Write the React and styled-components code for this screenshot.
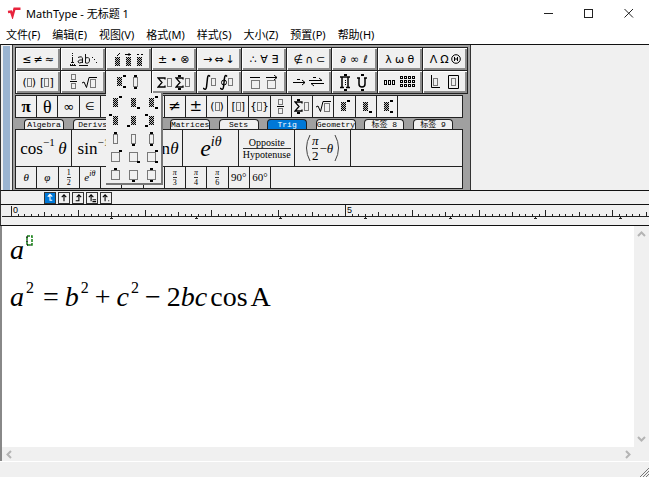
import React, { useState } from "react";
import styled, { createGlobalStyle } from "styled-components";

const GlobalStyle = createGlobalStyle`
  * {
    box-sizing: border-box;
  }
  body {
    margin: 0;
    background: #fff;
    color: #000;
    font-family: "Noto Sans", "Noto Sans CJK SC", sans-serif;
    font-size: 11px;
  }
  button {
    font: inherit;
    color: inherit;
    border: none;
    padding: 0;
    margin: 0;
    background: none;
  }
`;

const Window = styled.main`
  display: flex;
  flex-direction: column;
  min-height: 100vh;
  background: #f0f0f0;
`;

const TitleBar = styled.header`
  display: flex;
  align-items: center;
  height: 25px;
  padding-left: 7px;
  background: #fff;
`;

const Title = styled.h1`
  flex: 1;
  margin: 0;
  padding-left: 5px;
  font-size: 11px;
  font-weight: 400;
`;

const WindowButton = styled.button`
  display: flex;
  align-items: center;
  justify-content: center;
  width: 40px;
  height: 25px;
`;

const MenuBar = styled.nav`
  display: flex;
  gap: 12px;
  height: 19px;
  padding-left: 6px;
  background: #fff;
  line-height: 19px;
`;

const Toolbar = styled.section`
  display: flex;
  border-top: 1px solid #111;
  border-bottom: 1px solid #111;
  border-left: 1px solid #333;
`;

const Grip = styled.div`
  width: 7px;
  margin: 1px 2px 0;
  background: #9ab4d1;
`;

const Palette = styled.div`
  padding: 2px 2px 1px;
  border: 1px solid #333;
  border-width: 0 1px;
  background: #a0a0a0;
  font-family: "Liberation Serif", serif;
`;

const PaletteGrid = styled.div`
  display: grid;
  grid-template-columns: repeat(10, 1fr);
  gap: 1px;
  width: 453px;
  padding: 1px;
  background: #222;
`;

const PaletteItem = styled.div`
  position: relative;
`;

const PaletteButton = styled.button`
  display: flex;
  align-items: center;
  justify-content: center;
  gap: ${(p) => p.$gap ?? 2}px;
  width: 100%;
  height: 22px;
  background: #f0f0f0;
  box-shadow: ${(p) => (p.$open ? "none" : "inset 1px 1px #fff, inset -2px -2px #8c8c8c")};
`;

const Popup = styled.div`
  position: absolute;
  z-index: 2;
  top: 22px;
  left: 0;
  display: grid;
  grid-template-columns: repeat(3, 18px);
  grid-auto-rows: 18px;
  width: 57px;
  padding: 1px;
  background: #f0f0f0;
  box-shadow: inset -2px -2px #777;

  button {
    display: flex;
    align-items: center;
    justify-content: center;
  }
`;

const Strip = styled.div`
  width: 448px;
  height: ${(p) => p.$height || 23}px;
  margin-top: ${(p) => (p.$joined ? -1 : p.$top || 0)}px;
  border: 1px solid #222;
  background: #f0f0f0;
`;

const Cells = styled.div`
  display: grid;
  grid-template-columns: repeat(${(p) => p.$count}, 1fr);
  width: ${(p) => p.$width}px;
  height: 100%;
`;

const Cell = styled.button`
  display: flex;
  align-items: center;
  justify-content: ${(p) => (p.$end ? "flex-end" : "center")};
  gap: ${(p) => p.$gap || 0}px;
  min-width: 0;
  padding-right: ${(p) => (p.$end ? 4 : 0)}px;
  overflow: hidden;
  border-right: 1px solid #222;
  font-size: ${(p) => p.$size || 12}px;
  line-height: 1;
  white-space: nowrap;
`;

const Glyph = styled.span`
  min-width: ${(p) => (p.$narrow ? 4 : 9)}px;
  font-family: ${(p) => (p.$serif ? '"Liberation Serif", serif' : '"DejaVu Sans", sans-serif')};
  font-size: ${(p) => p.$size || 11}px;
  font-weight: ${(p) => (p.$bold ? 700 : 400)};
  line-height: 1;
  text-align: center;
`;

const Gap = styled.span`
  width: 4px;
`;

const Sup = styled.span`
  margin-left: ${(p) => (p.$up > 12 ? 2 : 0)}px;
  font-size: ${(p) => p.$size || 16}px;
  line-height: 0;
  vertical-align: ${(p) => p.$up}px;
`;

const Stack = styled.span`
  display: inline-flex;
  flex-direction: column;
  align-items: center;
  font-size: ${(p) => p.$size}px;
  line-height: ${(p) => p.$size + 1}px;

  & > :first-child {
    align-self: stretch;
    border-bottom: 1px solid #333;
    text-align: center;
  }
`;

const Tabs = styled.div`
  display: flex;
  justify-content: space-between;
  align-items: flex-end;
  width: 438px;
  height: 11px;
  padding-left: 9px;
`;

const Tab = styled.button`
  width: 40px;
  height: 10px;
  overflow: hidden;
  border: 1px solid #222;
  border-bottom: none;
  border-radius: 4px 4px 0 0;
  background: ${(p) => (p.$active ? "#0078d7" : "#f0f0f0")};
  color: ${(p) => (p.$active ? "#fff" : "#000")};
  font-family: "Liberation Mono", "Noto Sans CJK SC", monospace;
  font-size: 8px;
  line-height: 10px;
  white-space: nowrap;
`;

const StopBar = styled.div`
  display: flex;
  align-items: center;
  gap: 2px;
  height: 13px;
  padding-left: 43px;
  border-left: 1px solid #333;
`;

const StopButton = styled.button`
  display: flex;
  align-items: center;
  justify-content: center;
  width: 12px;
  height: 12px;
  border: 1px solid #333;
  background: ${(p) => (p.$active ? "#0078d7" : "#f0f0f0")};
  color: ${(p) => (p.$active ? "#fff" : "#000")};
`;

const RulerSvg = styled.svg`
  display: block;
  width: 100%;
  height: 22px;
  border-top: 1px solid #111;
  border-bottom: 1px solid #111;
  border-left: 1px solid #333;

  text {
    font-family: "Liberation Sans", sans-serif;
    font-size: 9px;
  }
`;

const Work = styled.section`
  display: flex;
  flex: 1;
  border-left: 2px solid #888;
`;

const Page = styled.div`
  flex: 1;
  padding-left: 8px;
  background: #fff;
  font-family: "Liberation Serif", serif;
  font-size: 28px;
`;

const Line = styled.div`
  height: 47px;
  line-height: 47px;
  white-space: nowrap;
`;

const Op = styled.span`
  margin: 0 6px;
`;

const Rel = styled.span`
  margin: 0 6px 0 9px;
`;

const Fn = styled.span`
  margin: 0 3px;
`;

const VScroll = styled.div`
  display: flex;
  flex-direction: column;
  justify-content: space-between;
  align-items: center;
  width: 15px;
  padding: 1px 0;
`;

const HScroll = styled.div`
  display: flex;
  justify-content: space-between;
  align-items: center;
  height: 14px;
  padding: 0 17px 0 3px;
  border-left: 2px solid #888;
`;

const StatusBar = styled.footer`
  display: flex;
  justify-content: flex-end;
  align-items: flex-end;
  height: 16px;
  border-top: 1px solid #fff;
`;

const BASE = { tl: [0, 0], tr: [10, 0], bl: [0, 11], br: [10, 11], t: [5, 0], b: [5, 12] };

function Slot({ w = 6, h = 10 }) {
  return (
    <svg width={w} height={h} aria-hidden="true">
      <rect x="0.5" y="0.5" width={w - 1} height={h - 1} fill="none" stroke="#000" strokeDasharray="1 1" />
    </svg>
  );
}

function Hatch({ x = 0, y = 0, w = 5, h = 9 }) {
  const rows = [];
  for (let i = 0; i < h; i++) {
    rows.push(
      <path key={i} d={`M${x + (i % 2)} ${y + i + 0.5}H${x + w}`} stroke="#000" strokeDasharray="1 1" />
    );
  }
  return (
    <g>
      <rect x={x} y={y} width={w} height={h} fill="#bbb" />
      {rows}
    </g>
  );
}

// a base (hatched, narrow or wide) with small filled marks around it
function Script({ base = "hatch", marks = [] }) {
  return (
    <svg width="14" height="14" aria-hidden="true">
      {base === "hatch" && <Hatch x={4} y={2} w={5} h={9} />}
      {base === "narrow" && (
        <rect x="4.5" y="2.5" width="4" height="9" fill="none" stroke="#000" strokeDasharray="1 1" />
      )}
      {base === "wide" && (
        <rect x="2.5" y="2.5" width="8" height="9" fill="none" stroke="#000" strokeDasharray="1 1" />
      )}
      {marks.map((m) => (
        <rect key={m} x={BASE[m][0]} y={BASE[m][1]} width="3" height="2" fill="#000" />
      ))}
    </svg>
  );
}

function Accent({ d }) {
  return (
    <svg width="7" height="13" aria-hidden="true">
      <Hatch x={1} y={4} w={5} h={9} />
      <path d={d} fill="none" stroke="#000" />
    </svg>
  );
}

function Spacing() {
  return (
    <svg width="29" height="15" aria-hidden="true" fill="none" stroke="#111">
      <path d="M3.5 1V9M2 10.5H5M1 12.5H7" strokeDasharray="1 1" />
      <path d="M3.5 6V11M1 13.5H7" />
      <path d="M9 5.5Q13.500 3.500 13.500 7V11M13.500 8Q9 7.500 9 10Q10 12 13.500 10M16.500 2V11Q20.500 12 20.500 8Q20.500 4.500 16.500 6" />
      <path d="M10 13.500H19" />
      <path d="M23 5.500h1M25 7.500h1M27 10.500h1" />
    </svg>
  );
}

function Fraction() {
  return (
    <svg width="8" height="16" aria-hidden="true" fill="none" stroke="#000">
      <rect x="1.5" y="0.5" width="4" height="5" strokeDasharray="1 1" />
      <path d="M0 7.500H7" />
      <rect x="1.5" y="9.5" width="4" height="5" strokeDasharray="1 1" />
    </svg>
  );
}

function Root() {
  return (
    <svg width="15" height="13" aria-hidden="true" fill="none" stroke="#000">
      <path d="M0 7L2 6L4.500 11.500L7 1.500H15" />
      <rect x="8.5" y="3.5" width="5" height="8" strokeDasharray="1 1" />
    </svg>
  );
}

function Fence({ left, right }) {
  return (
    <>
      <Glyph $narrow>{left}</Glyph>
      <Slot w={5} h={9} />
      <Glyph $narrow>{right}</Glyph>
    </>
  );
}

function Sum({ limits }) {
  return (
    <svg width="15" height="15" aria-hidden="true">
      <path d="M8 4.500V3H1L5 7.500L1 12H8V10.500" fill="none" stroke="#000" strokeWidth="1.3" />
      {limits && <path d="M3 14h3M3 1h3" stroke="#000" strokeWidth="2" />}
      <rect x="10.5" y="3.5" width="4" height="8" fill="none" stroke="#000" strokeDasharray="1 1" />
    </svg>
  );
}

function Integral({ loop }) {
  return (
    <svg width="14" height="17" aria-hidden="true" fill="none" stroke="#000">
      <path d="M7 2.500Q5 0 4.500 4L3.500 13Q3 17 0 14" strokeWidth="1.500" />
      {loop && <circle cx="4" cy="8.500" r="2.500" />}
      <rect x="8.500" y="4.500" width="4" height="7" strokeDasharray="1 1" />
    </svg>
  );
}

function Bar({ arrow }) {
  return (
    <svg width="12" height="15" aria-hidden="true" fill="none" stroke="#000">
      <path d={arrow ? "M0 2.500H11M8 0L11 2.500L8 5" : "M0 2.500H10"} />
      <rect x="1.5" y="5.5" width="8" height="8" strokeDasharray="1 1" />
    </svg>
  );
}

function LabelArrows() {
  return (
    <svg width="32" height="12" aria-hidden="true" fill="none" stroke="#000">
      <path d="M0 6.500H12M9 4L12 6.500L9 9M4 3.500h3M16 4.500H29L26 2M31 7.500H18L21 10" />
      <path d="M20 1.500h3" />
    </svg>
  );
}

function Product({ cup }) {
  return (
    <svg width="11" height="17" aria-hidden="true" fill="none" stroke="#000">
      <path d={cup ? "M2 4V10Q2 13 5 13Q8 13 8 10V4M0 4h3M7 4h3" : "M2 3V13M8 3V13M0 3h10M0 13.500h4M6 13.500h4"} strokeWidth="1.5" />
      <path d="M4 1h3M4 16h3" strokeWidth="2" />
      {!cup && <path d="M5.500 6V11" strokeDasharray="1 1" />}
    </svg>
  );
}

function Matrix({ rows, cols }) {
  const cells = [];
  for (let r = 0; r < rows; r++) {
    for (let c = 0; c < cols; c++) {
      cells.push(<rect key={r + "-" + c} x={c * 4 + 0.5} y={r * 4 + 0.5} width="2" height={rows > 1 ? 2 : 4} />);
    }
  }
  return (
    <svg width={cols * 4} height={rows > 1 ? rows * 4 : 5} aria-hidden="true" fill="none" stroke="#000">
      {cells}
    </svg>
  );
}

function Frame({ d }) {
  return (
    <svg width="12" height="14" aria-hidden="true" fill="none" stroke="#000">
      <path d={d} />
      <rect x="3.5" y="3.5" width="4" height="7" strokeDasharray="1 1" />
    </svg>
  );
}

function CircledTheta() {
  return (
    <svg width="10" height="10" aria-hidden="true" fill="none" stroke="#000">
      <circle cx="5" cy="5" r="4.300" />
      <path d="M3.500 3V7M6.500 3V7M3.500 5H6.500" />
    </svg>
  );
}

const glyphs = (...list) => list.map((g, i) => <Glyph key={i}>{g}</Glyph>);

const palette = [
  ["Relations", glyphs("≤", "≠", "≈")],
  ["Spaces", <Spacing />],
  ["Embellishments", <><Accent d="M3 3L6 0" /><Accent d="M0 1.500H6M4 0V3" /><Accent d="M1 1.500h2M5 1.500h2" /></>, 4],
  ["Operators", glyphs("±", "•", "⊗")],
  ["Arrows", glyphs("→", "⇔", "↓")],
  ["Logic", glyphs("∴", "∀", "∃")],
  ["Sets", glyphs("∉", "∩", "⊂")],
  ["Miscellaneous", glyphs("∂", "∞", "ℓ")],
  ["Greek lower case", glyphs("λ", "ω", "θ")],
  ["Greek upper case", <>{glyphs("Λ", "Ω")}<CircledTheta /></>],
  ["Fences", <><Fence left="(" right=")" /><Gap /><Fence left="[" right="]" /></>, 0],
  ["Fractions and radicals", <><Fraction /><Root /></>, 4],
  ["Scripts", <><Script marks={["tr", "br"]} /><Script base="narrow" marks={["t", "b"]} /></>, 2],
  ["Sums", <><Sum /><Sum limits /></>, 3],
  ["Integrals", <><Integral /><Integral loop /></>, 3],
  ["Bars", <><Bar /><Bar arrow /></>, 4],
  ["Labelled arrows", <LabelArrows />],
  ["Products", <><Product /><Product cup /></>, 6],
  ["Matrices", <><Matrix rows={1} cols={3} /><Matrix rows={3} cols={4} /></>, 4],
  ["Boxes", <><Frame d="M1.500 0V12.500H10" /><Frame d="M0.500 0.500H10.500V13.500H0.500Z" /></>, 6],
];

const scripts = ["hatch", "hatch", "narrow", "wide", "wide"].flatMap((base, row) => {
  const [up, down] = [["tr", "br"], ["tl", "bl"], ["t", "b"], ["tr", "br"], ["t", "b"]][row];
  return [[up], [down], [up, down]].map((marks) => ({ base, marks }));
});

const symbols = [
  <Glyph $size={17} $bold $serif>π</Glyph>,
  <Glyph $size={18} $serif>θ</Glyph>,
  <Glyph $size={13}>∞</Glyph>,
  <Glyph>∈</Glyph>,
  <Glyph>→</Glyph>,
  null,
  null,
  <Glyph $size={15}>≠</Glyph>,
  <Glyph $size={15}>±</Glyph>,
  <Fence left="(" right=")" />,
  <Fence left="[" right="]" />,
  <Fence left="{" right="}" />,
  <Fraction />,
  <Sum limits />,
  <Root />,
  <Script marks={["tr"]} />,
  <Script marks={["br"]} />,
  <Script marks={["tr", "br"]} />,
];

const piOver = (n) => (
  <Stack $size={8}>
    <i>π</i>
    <span>{n}</span>
  </Stack>
);

const smallFormulas = [
  <i>θ</i>,
  <i>φ</i>,
  <Stack $size={8}><span>1</span><span>2</span></Stack>,
  <i>e<Sup $size={8} $up={5}>iθ</Sup></i>,
  "–",
  null,
  null,
  piOver(3),
  piOver(4),
  piOver(6),
  "90°",
  "60°",
];

const tabs = ["Algebra", "Derivs", "Limits", "Matrices", "Sets", "Trig", "Geometry", "标签 8", "标签 9"];
const menus = ["文件(F)", "编辑(E)", "视图(V)", "格式(M)", "样式(S)", "大小(Z)", "预置(P)", "帮助(H)"];
const stops = [
  ["Left tab", "M3 3.500H6M5.500 1V8H8M3 4L5.500 1.500L8 4"],
  ["Center tab", "M5.500 9V2M3 4.500L5.500 2L8 4.500"],
  ["Right tab", "M3 8.500H6.500V2M4 4.500L6.500 2L9 4.500"],
  ["Relation tab", "M4.500 9V2M2 4.500L4.500 2L7 4.500M6 7.500h4M6 9.500h4"],
  ["Decimal tab", "M4.500 9V2M2 4.500L4.500 2L7 4.500M8 8.500h1"],
];

function Ruler() {
  const ticks = [];
  for (let i = 1; i < 300; i++) {
    const x = Math.round(10 + i * 6.68) + 0.5;
    const h = i % 50 === 0 ? 11 : i % 10 === 0 ? 6 : i % 5 === 0 ? 4 : 2;
    ticks.push(<path key={i} d={`M${x} 11V${11 - h}`} />);
  }
  const marks = [];
  for (let i = 1; i < 24; i++) {
    const x = Math.round(25 + i * 84.8);
    marks.push(<path key={i} d={`M${x + 0.5} 11V14M${x - 1} 13.5h3`} />);
  }
  return (
    <RulerSvg aria-label="Ruler">
      <g stroke="#222">
        <path d="M10.500 1V11M1 11.500H4000" />
        {ticks}
        {marks}
      </g>
      <text x="12" y="8">0</text>
      <text x="346" y="8">5</text>
    </RulerSvg>
  );
}

function Chevron({ d }) {
  return (
    <svg width="9" height="9" aria-hidden="true">
      <path d={d} fill="none" stroke="#b4b4b4" strokeWidth="2" />
    </svg>
  );
}

function App() {
  const [tab, setTab] = useState("Trig");
  const [open, setOpen] = useState("Scripts");

  return (
    <Window>
      <GlobalStyle />
      <TitleBar>
        <svg width="14" height="12" viewBox="0 0 14 12" aria-hidden="true">
          <path d="M1 5L4 4.500L5.500 9L7.500 1.800H13.500" fill="none" stroke="#e8233c" strokeWidth="2.400" />
        </svg>
        <Title>MathType - 无标题 1</Title>
        <WindowButton aria-label="Minimize">
          <svg width="10" height="10"><path d="M0 5.500H9" stroke="#222" /></svg>
        </WindowButton>
        <WindowButton aria-label="Maximize">
          <svg width="10" height="10"><rect x="0.5" y="1.5" width="8" height="8" fill="none" stroke="#222" /></svg>
        </WindowButton>
        <WindowButton aria-label="Close">
          <svg width="10" height="10"><path d="M0.500 1L9 9.500M9 1L0.500 9.500" stroke="#222" /></svg>
        </WindowButton>
      </TitleBar>

      <MenuBar>
        {menus.map((m) => (
          <button key={m}>{m}</button>
        ))}
      </MenuBar>

      <Toolbar>
        <Grip />
        <Palette>
          <PaletteGrid>
            {palette.map(([name, icon, gap]) => (
              <PaletteItem key={name}>
                <PaletteButton
                  aria-label={name}
                  $gap={gap}
                  $open={open === name}
                  onClick={() => setOpen(open === name ? "" : name)}
                >
                  {icon}
                </PaletteButton>
                {name === "Scripts" && open === name && (
                  <Popup>
                    {scripts.map((s, i) => (
                      <button key={i} aria-label={"Script " + (i + 1)}>
                        <Script {...s} />
                      </button>
                    ))}
                  </Popup>
                )}
              </PaletteItem>
            ))}
          </PaletteGrid>

          <Strip $top={1}>
            <Cells $width={382} $count={18}>
              {symbols.map((s, i) => (
                <Cell key={i}>{s}</Cell>
              ))}
            </Cells>
          </Strip>

          <Tabs role="tablist">
            {tabs.map((t) => (
              <Tab key={t} role="tab" aria-selected={tab === t} $active={tab === t} onClick={() => setTab(t)}>
                {t}
              </Tab>
            ))}
          </Tabs>

          <Strip $height={38}>
            <Cells $width={335} $count={6}>
              <Cell $size={17}><span>cos<Sup $size={11} $up={8}>−1</Sup>&thinsp;<i>θ</i></span></Cell>
              <Cell $size={17}><span>sin<Sup $size={11} $up={8}>−1</Sup>&thinsp;<i>θ</i></span></Cell>
              <Cell $size={17} $end><span>tan<i>θ</i></span></Cell>
              <Cell $size={24}><i>e<Sup $size={14} $up={10}>iθ</Sup></i></Cell>
              <Cell>
                <Stack $size={10}><span>Opposite</span><span>Hypotenuse</span></Stack>
              </Cell>
              <Cell $size={13} $gap={1}>
                <svg width="6" height="28" aria-hidden="true"><path d="M5 1Q-2 14 5 27" fill="none" stroke="#444" /></svg>
                <Stack $size={13}><i>π</i><span>2</span></Stack>
                <span>−<i>θ</i></span>
                <svg width="6" height="28" aria-hidden="true"><path d="M1 1Q8 14 1 27" fill="none" stroke="#444" /></svg>
              </Cell>
            </Cells>
          </Strip>
          <Strip $joined>
            <Cells $width={255} $count={12}>
              {smallFormulas.map((f, i) => (
                <Cell key={i} $size={11}>{f}</Cell>
              ))}
            </Cells>
          </Strip>
        </Palette>
      </Toolbar>

      <StopBar>
        {stops.map(([name, d], i) => (
          <StopButton key={name} aria-label={name} $active={i === 0}>
            <svg width="10" height="10" viewBox="0 0 11 11">
              <path d={d} fill="none" stroke="currentColor" strokeWidth="1.200" />
            </svg>
          </StopButton>
        ))}
      </StopBar>
      <Ruler />

      <Work>
        <Page role="textbox" aria-label="Equation">
          <Line>
            <i>a</i>
            <Sup $up={13}>
              <svg width="7" height="11" aria-hidden="true">
                <rect x="1" y="1" width="5" height="9" fill="none" stroke="#158015" strokeWidth="1.500" strokeDasharray="3 1" />
                <path d="M1 1V10H5" fill="none" stroke="#000" strokeDasharray="2 2" />
              </svg>
            </Sup>
          </Line>
          <Line>
            <i>a</i><Sup $up={13}>2</Sup>
            <Rel>=</Rel>
            <i>b</i><Sup $up={13}>2</Sup>
            <Op>+</Op>
            <i>c</i><Sup $up={13}>2</Sup>
            <Op>−</Op>
            2<i>bc</i><Fn>cos</Fn>A
          </Line>
        </Page>
        <VScroll>
          <button aria-label="Scroll up"><Chevron d="M1 6L4.500 2.500L8 6" /></button>
          <button aria-label="Scroll down"><Chevron d="M1 3L4.500 6.500L8 3" /></button>
        </VScroll>
      </Work>
      <HScroll>
        <button aria-label="Scroll left"><Chevron d="M6 1L2.500 4.500L6 8" /></button>
        <button aria-label="Scroll right"><Chevron d="M3 1L6.500 4.500L3 8" /></button>
      </HScroll>
      <StatusBar>
        <svg width="9" height="9" aria-hidden="true">
          <path d="M0 9L9 0M3 9L9 3M6 9L9 6" stroke="#777" />
        </svg>
      </StatusBar>
    </Window>
  );
}

export default App;
